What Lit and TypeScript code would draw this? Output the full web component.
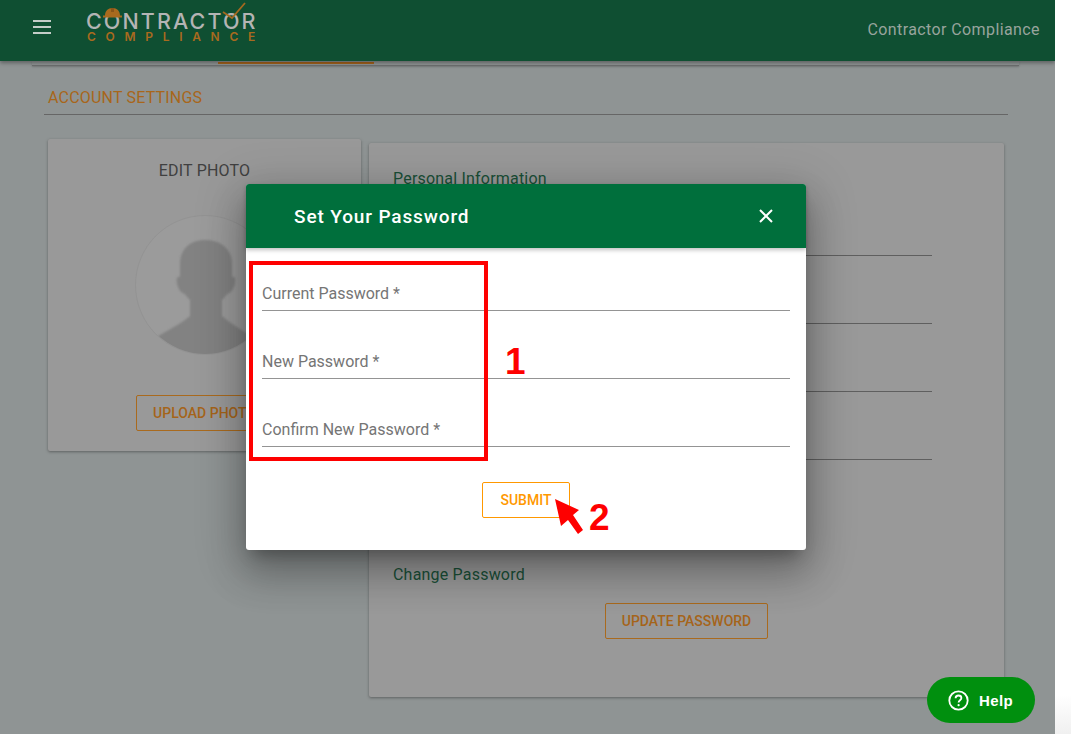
import { LitElement, html, css } from 'lit';
import { customElement } from 'lit/decorators.js';

@customElement('app-root')
export class AppRoot extends LitElement {
    static styles = css`
        :host {
            display: block;
            width: 1071px;
            height: 734px;
            overflow: hidden;
            background: linear-gradient(#fff 695px, #f0f0f0);
            font-family: Roboto, "Liberation Sans", sans-serif;
        }

        .page {
            position: relative;
            width: 1055px;
            height: 734px;
            overflow: hidden;
            background: #8f9494;
        }

        /* top bar */
        .topbar {
            position: relative;
            z-index: 2;
            display: flex;
            align-items: center;
            height: 61px;
            background: #0f4f32;
            box-shadow: 0 2px 4px rgba(0, 0, 0, 0.35);
        }

        .burger {
            display: flex;
            flex-direction: column;
            gap: 4px;
            width: 18px;
            margin: 0 0 7px 33px;
        }

        .burger span {
            height: 2px;
            background: #c4cdc8;
        }

        .logo {
            position: relative;
            width: 172px;
            height: 44px;
            margin: -17px 0 0 35px;
        }

        .logo-main {
            position: absolute;
            left: 0;
            top: 11px;
            font: 500 21.5px/20px Inter, sans-serif;
            letter-spacing: 2.1px;
            color: #b4b4b4;
            white-space: nowrap;
        }

        .logo-sub {
            position: absolute;
            left: 1px;
            top: 31px;
            font: 600 12px/12px Inter, sans-serif;
            letter-spacing: 9.7px;
            color: #a96a1e;
            white-space: nowrap;
        }

        .logo svg {
            position: absolute;
            left: 0;
            top: 0;
        }

        .brand {
            margin: -2px 0 0 auto;
            padding-right: 15px;
            font-size: 16px;
            letter-spacing: 0.4px;
            color: #98a49d;
        }

        /* page content behind the dialog */
        .tabs {
            width: 987px;
            height: 4px;
            margin-left: 32px;
            border-bottom: 1px solid #6c6f6f;
            box-shadow: 0 1px 2px rgba(0, 0, 0, 0.2);
            background: #8f9494;
        }

        .tab-line {
            position: relative;
            top: 1px;
            width: 156px;
            height: 2px;
            margin-left: 186px;
            background: #a5641c;
        }

        .section-title {
            width: 960px;
            margin: 22px 0 0 44px;
            padding: 0 0 7px 4px;
            border-bottom: 1px solid #666;
            font-size: 16px;
            line-height: 19px;
            letter-spacing: 0.2px;
            color: #a8661a;
        }

        .columns {
            display: flex;
            align-items: flex-start;
            gap: 8px;
            margin-left: 48px;
        }

        .card {
            box-sizing: border-box;
            background: #999;
            border-radius: 2px;
            box-shadow: 0 1px 3px rgba(0, 0, 0, 0.35);
        }

        .photo-card {
            display: flex;
            flex-direction: column;
            align-items: center;
            width: 313px;
            height: 312px;
            margin-top: 24px;
            padding-top: 23px;
        }

        .photo-title {
            font-size: 16px;
            line-height: 18px;
            letter-spacing: 0.2px;
            color: #404040;
        }

        .avatar {
            display: block;
            margin-top: 35px;
        }

        .outline-btn {
            box-sizing: border-box;
            height: 36px;
            padding: 0;
            border: 1px solid #a96a1e;
            border-radius: 2px;
            background: transparent;
            font: 500 14px Roboto, sans-serif;
            color: #a5641a;
        }

        .upload-btn {
            width: 137px;
            margin-top: 40px;
        }

        .info-card {
            width: 635px;
            height: 554px;
            margin-top: 28px;
            padding: 27px 0 0 24px;
        }

        .info-title {
            font-size: 16px;
            line-height: 18px;
            letter-spacing: 0.2px;
            color: #1a4f37;
        }

        .info-row {
            box-sizing: border-box;
            width: 539px;
            height: 68px;
            border-bottom: 1px solid #5f5f5f;
        }

        .password-title {
            margin-top: 106px;
        }

        .update-btn {
            display: block;
            width: 163px;
            margin: 19px 0 0 212px;
        }

        /* dialog */
        .dialog-layer {
            position: absolute;
            inset: 0;
            z-index: 3;
            display: flex;
            justify-content: center;
            padding: 184px 3px 0 0;
            box-sizing: border-box;
        }

        .dialog {
            width: 560px;
            height: 366px;
            background: #fff;
            border-radius: 3px;
            box-shadow: 0 11px 15px -7px rgba(0, 0, 0, 0.28), 0 24px 38px 3px rgba(0, 0, 0, 0.2),
                0 9px 46px 8px rgba(0, 0, 0, 0.17);
        }

        .dialog-head {
            display: flex;
            align-items: center;
            justify-content: space-between;
            height: 64px;
            padding: 0 33px 0 48px;
            border-radius: 3px 3px 0 0;
            background: #006f3c;
            box-shadow: 0 2px 4px rgba(0, 0, 0, 0.25);
            font-size: 19px;
            font-weight: 500;
            letter-spacing: 0.88px;
            color: #fff;
        }

        .dialog-body {
            display: flex;
            flex-direction: column;
            gap: 24px;
            padding: 19px 16px 0;
        }

        .field {
            box-sizing: border-box;
            height: 44px;
            padding: 18px 0 0;
            border-bottom: 1px solid #949494;
            font-size: 16px;
            line-height: 18px;
            color: #757575;
        }

        .submit {
            align-self: center;
            box-sizing: border-box;
            width: 88px;
            height: 36px;
            margin-top: 11px;
            padding: 0;
            border: 1px solid #ff9800;
            border-radius: 2px;
            background: #fff;
            font: 500 14px Roboto, sans-serif;
            color: #ff9800;
        }

        /* red annotations drawn over the shot */
        .mark-box {
            position: absolute;
            left: 249px;
            top: 261px;
            width: 239px;
            height: 200px;
            box-sizing: border-box;
            border: 4.5px solid #fe0000;
        }

        .mark-num {
            position: absolute;
            font: 700 37px/40px "Liberation Sans", sans-serif;
            color: #fe0000;
        }

        .mark-arrow {
            position: absolute;
            left: 550px;
            top: 495px;
        }

        .help {
            position: absolute;
            left: 927px;
            top: 677px;
            z-index: 4;
            display: flex;
            align-items: center;
            gap: 10px;
            box-sizing: border-box;
            width: 108px;
            height: 46px;
            padding-left: 21px;
            border-radius: 23px;
            background: #008f0e;
            font: 700 15px "Liberation Sans", sans-serif;
            letter-spacing: 0.4px;
            color: #fff;
        }
    `;

    renderLogoMarks() {
        return html`<svg width="172" height="44" viewBox="0 0 172 44" fill="none">
            <path d="M17 17.500V15.500H19C19 11 22 8 26.500 8S34 11 34 15.500H36V17.500Z" fill="#a96a1e" />
            <path d="M25 8h3v4h-3z" fill="#8a5518" />
            <path d="M137 12l9 6L159 3" stroke="#a5691f" stroke-width="1.8" />
        </svg>`;
    }

    renderAvatar() {
        return html`<svg class="avatar" width="140" height="140" viewBox="0 0 140 140">
            <defs>
                <clipPath id="round"><circle cx="70" cy="70" r="69" /></clipPath>
                <filter id="soft"><feGaussianBlur stdDeviation="0.8" /></filter>
            </defs>
            <circle cx="70" cy="70" r="69.500" fill="#9b9b9b" stroke="#939393" />
            <g clip-path="url(#round)">
                <path
                    filter="url(#soft)"
                    fill="#828282"
                    d="M70 25C55 25 45 34 45 49V62C42 61 41 64 42 68C43 74 46 78 50 79C51 81 53 83 55 85V101C47 108 35 114 20 123V145H120V123C105 114 95 108 87 101V85C89 83 91 81 92 79C96 78 99 74 100 68C101 64 100 61 97 62V49C97 34 86 25 70 25Z"
                />
            </g>
        </svg>`;
    }

    renderHelpIcon() {
        return html`<svg width="21" height="21" viewBox="0 0 21 21" fill="none">
            <circle cx="10.500" cy="10.500" r="9.200" stroke="#fff" stroke-width="1.800" />
            <path
                d="M7.600 8.200c0-1.700 1.300-2.700 2.900-2.700s2.900 1 2.900 2.500c0 2.200-2.800 2.300-2.800 4.500"
                stroke="#fff"
                stroke-width="1.800"
            />
            <circle cx="10.600" cy="15.200" r="1.100" fill="#fff" />
        </svg>`;
    }

    render() {
        return html`
            <div class="page">
                <header class="topbar">
                    <div class="burger"><span></span><span></span><span></span></div>
                    <div class="logo">
                        <div class="logo-main">CONTRACTOR</div>
                        <div class="logo-sub">COMPLIANCE</div>
                        ${this.renderLogoMarks()}
                    </div>
                    <div class="brand">Contractor Compliance</div>
                </header>

                <div class="tabs"><div class="tab-line"></div></div>
                <div class="section-title">ACCOUNT SETTINGS</div>

                <div class="columns">
                    <section class="card photo-card">
                        <div class="photo-title">EDIT PHOTO</div>
                        ${this.renderAvatar()}
                        <button class="outline-btn upload-btn">UPLOAD PHOTO</button>
                    </section>
                    <section class="card info-card">
                        <div class="info-title">Personal Information</div>
                        <div class="info-row"></div>
                        <div class="info-row"></div>
                        <div class="info-row"></div>
                        <div class="info-row"></div>
                        <div class="info-title password-title">Change Password</div>
                        <button class="outline-btn update-btn">UPDATE PASSWORD</button>
                    </section>
                </div>

                <div class="dialog-layer">
                    <div class="dialog">
                        <div class="dialog-head">
                            <span>Set Your Password</span>
                            <svg width="14" height="14" viewBox="0 0 14 14" stroke="#fff" stroke-width="2">
                                <path d="M1 1l12 12M13 1L1 13" />
                            </svg>
                        </div>
                        <div class="dialog-body">
                            <div class="field">Current Password *</div>
                            <div class="field">New Password *</div>
                            <div class="field">Confirm New Password *</div>
                            <button class="submit">SUBMIT</button>
                        </div>
                    </div>
                </div>

                <div class="dialog-layer">
                    <div class="mark-box"></div>
                    <div class="mark-num" style="left:505px;top:342px">1</div>
                    <div class="mark-num" style="left:589px;top:498px">2</div>
                    <svg class="mark-arrow" width="40" height="44" viewBox="550 495 40 44">
                        <path d="M555 499l24 11-6 5 10 15-5 4-10-14-7 6z" fill="#fe0000" />
                    </svg>
                </div>

                <div class="help">${this.renderHelpIcon()}<span>Help</span></div>
            </div>
        `;
    }
}
